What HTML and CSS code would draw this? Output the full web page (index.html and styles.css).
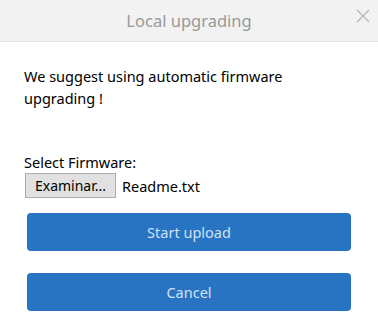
FILE: index.html
```html
<!DOCTYPE html>
<html lang="en">
<head>
  <meta charset="UTF-8">
  <meta name="viewport" content="width=device-width, initial-scale=1.0">
  <title>Local upgrading</title>
  <link rel="stylesheet" href="styles.css">
</head>
<body>
  <div class="dialog">
    <div class="dialog-header">
      <span class="dialog-title">Local upgrading</span>
      <span class="close-button">
        <svg width="14" height="14" viewBox="0 0 14 14">
          <path d="M1 1 L13 13 M13 1 L1 13" stroke="#b5b5b5" stroke-width="1.2" fill="none"/>
        </svg>
      </span>
    </div>

    <div class="dialog-body">
      <p class="notice">We suggest using automatic firmware upgrading !</p>

      <div class="firmware-field">
        <label class="field-label">Select Firmware:</label>
        <div class="file-row">
          <button class="file-button">Examinar...</button>
          <span class="file-name">Readme.txt</span>
        </div>
      </div>

      <div class="actions">
        <button class="primary-button">Start upload</button>
        <button class="primary-button">Cancel</button>
      </div>
    </div>
  </div>
</body>
</html>
```

FILE: styles.css
```css
body {
  margin: 0;
  padding: 0;
  background-color: #fff;
  font-family: "Noto Sans", "Open Sans", sans-serif;
}

.dialog {
  width: 378px;
  height: 326px;
  overflow: hidden;
}

.dialog-header {
  height: 41px;
  border-bottom: 1px solid #e3e3e3;
  background-color: #f2f2f2;
  display: flex;
  align-items: center;
  justify-content: center;
  position: relative;
}

.dialog-title {
  font-size: 16.5px;
  color: #999;
}

.close-button {
  position: absolute;
  right: 8px;
  top: 9px;
  display: flex;
}

.dialog-body {
  padding: 23px 24px 0 24px;
}

.notice {
  margin: 0;
  font-size: 14.5px;
  line-height: 22px;
  color: #000;
}

.firmware-field {
  margin-top: 42px;
}

.field-label {
  display: block;
  font-size: 14.5px;
  line-height: 22px;
  color: #000;
}

.file-row {
  display: flex;
  align-items: center;
  gap: 6px;
}

.file-button {
  width: 91px;
  height: 25px;
  padding: 0;
  margin-left: 1px;
  background-color: #e1e1e1;
  border: 1px solid #adadad;
  border-radius: 0;
  font-family: inherit;
  font-size: 14px;
  color: #000;
}

.file-name {
  font-size: 14.5px;
}

.actions {
  display: flex;
  flex-direction: column;
  gap: 22px;
  margin-top: 15px;
  padding: 0 3px;
}

.primary-button {
  height: 38px;
  border: none;
  border-radius: 4px;
  background-color: #2874c2;
  color: #cfe1f6;
  font-family: inherit;
  font-size: 14.5px;
  cursor: pointer;
}
```
